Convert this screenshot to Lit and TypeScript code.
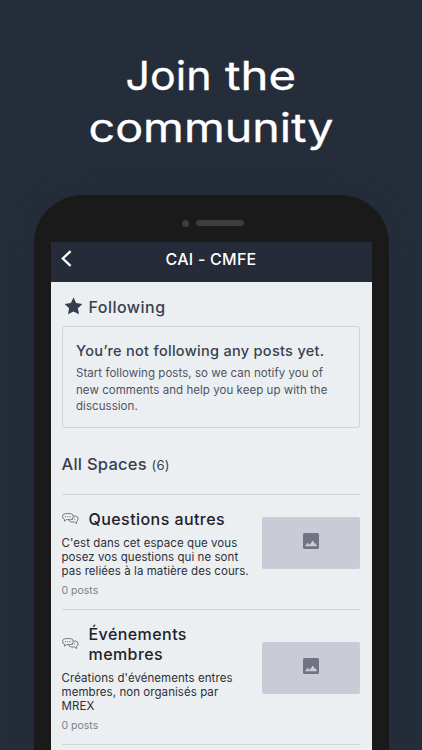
import { LitElement, html, css } from "lit";
import { customElement, property } from "lit/decorators.js";

interface Space {
  title: string[];
  text: string[];
  posts: number;
}

const spaces: Space[] = [
  {
    title: ["Questions autres"],
    text: ["C'est dans cet espace que vous", "posez vos questions qui ne sont", "pas reliées à la matière des cours."],
    posts: 0,
  },
  {
    title: ["Événements", "membres"],
    text: ["Créations d'événements entres", "membres, non organisés par", "MREX"],
    posts: 0,
  },
];

@customElement("space-row")
export class SpaceRow extends LitElement {
  @property({ attribute: false }) space!: Space;

  static styles = css`
    :host { display: flex; justify-content: space-between; align-items: center; border-top: 1px solid #d2d6da; }
    .info { padding: 14px 0 11.4px; white-space: nowrap; min-width: 0; }
    .head { display: flex; align-items: center; margin-bottom: 7px; }
    .bubbles { width: 17px; height: 12px; margin-right: 10px; flex: none; }
    .title { font-size: 16px; line-height: 20px; font-weight: 500; color: #1f2128; letter-spacing: 0.43px; }
    .line { display: block; }
    .text { font-size: 11.5px; line-height: 14.2px; color: #2d3036; letter-spacing: 0.06px; }
    .posts { font-size: 10.5px; line-height: 14px; color: #7d8085; margin-top: 5px; letter-spacing: 0; }
    .thumb { width: 97.5px; height: 52px; background: #c9ccd6; border-radius: 2px; margin-bottom: 18px; display: flex; justify-content: center; flex: none; }
    .photo { width: 16px; height: 16px; margin-top: 16px; }
  `;

  render() {
    const s = this.space;
    return html`
      <div class="info">
        <div class="head">
          <svg class="bubbles" viewBox="0 0 17 12" fill="none" stroke="#62666d" stroke-width=".85" stroke-linejoin="round">
            <path d="M3.3.6h5a2.9 2.9 0 0 1 0 6H4.4L2.5 8.2V6.4A3 3 0 0 1 3.3.6Z" />
            <path d="M11.3 3.1h2a2.8 2.8 0 0 1 1.3 5.3v2.2l-2-1.6H9.4a2.8 2.8 0 0 1-2.5-2" />
            <path d="M3 3.7h1M5.3 3.7h1M7.5 3.7h1M10 6h.9M12.3 6h.9" stroke-width="1" />
          </svg>
          <div class="title">${s.title.map((t) => html`<span class="line">${t}</span>`)}</div>
        </div>
        <div class="text">${s.text.map((t) => html`<span class="line">${t}</span>`)}</div>
        <div class="posts">${s.posts} posts</div>
      </div>
      <div class="thumb">
        <svg class="photo" viewBox="0 0 16 16">
          <rect width="16" height="16" rx="1.6" fill="#707482" />
          <path d="M2 13.2 4.6 9.8l1.9 2 3.5-4.3 1.7 3.2.9-.5 1.4 3Z" fill="#c9ccd6" />
        </svg>
      </div>
    `;
  }
}

@customElement("app-root")
export class AppRoot extends LitElement {
  static styles = css`
    :host { display: flex; flex-direction: column; align-items: center; box-sizing: border-box; width: 422px; height: 750px; overflow: hidden; background: #262d3a; font-family: Inter, sans-serif; }
    .headline { width: 422px; height: 195px; flex: none; fill: #fff; stroke: #fff; stroke-width: 0.35px; font-size: 39.5px; }
    .phone { width: 355px; height: 620px; flex: none; box-sizing: border-box; padding: 0 17px; background: #1a1a1a; border-radius: 49px 49px 0 0; box-shadow: 0 0 22px #222b3a; }
    .top { height: 47px; display: flex; align-items: center; justify-content: center; gap: 7px; padding: 9px 0 0 4px; box-sizing: border-box; }
    .camera { width: 7px; height: 7px; border-radius: 50%; background: #3d3d3d; }
    .speaker { width: 48px; height: 6px; border-radius: 3px; background: #3d3d3d; }
    .screen { background: #ebeff2; height: 573px; }
    .bar { height: 40px; background: #262b3a; color: #fff; display: grid; grid-template-columns: 32px 1fr 32px; }
    .back { width: 11px; height: 17px; margin: 8px 0 0 10.5px; }
    .name { text-align: center; font-size: 16px; line-height: 34px; font-weight: 500; letter-spacing: 0.25px; }
    .body { padding: 15px 12px 0 11px; color: #3a3e4d; }
    .following { display: flex; align-items: center; height: 20px; font-size: 16px; font-weight: 500; letter-spacing: 0.47px; padding-left: 2px; gap: 6px; }
    .star { width: 19px; height: 18px; margin-top: -2px; }
    .card { box-sizing: border-box; height: 102px; margin-top: 9px; border: 1px solid #cfd3d8; border-radius: 3px; padding: 14px 13.5px; white-space: nowrap; }
    .card-title { font-size: 14.5px; line-height: 20px; font-weight: 500; letter-spacing: 0.3px; }
    .card-text { font-size: 11.5px; line-height: 16.7px; margin-top: 4px; letter-spacing: 0.05px; color: #4f5362; }
    .line { display: block; }
    .all { font-size: 16.5px; line-height: 20px; font-weight: 500; letter-spacing: 0.25px; margin: 26px 0 19px; }
    .count { font-size: 13px; font-weight: 400; }
    .spaces { border-bottom: 1px solid #d2d6da; }
    .row { display: flex; }
  `;

  render() {
    return html`
      <svg class="headline" viewBox="0 0 422 195">
        <text x="125.5" y="89.5" textLength="86" lengthAdjust="spacingAndGlyphs">Join</text>
        <text x="225" y="89.5" textLength="71" lengthAdjust="spacingAndGlyphs">the</text>
        <text x="88.5" y="141.5" textLength="245" lengthAdjust="spacingAndGlyphs">community</text>
      </svg>
      <div class="phone">
        <div class="top"><span class="camera"></span><span class="speaker"></span></div>
        <div class="screen">
          <div class="bar">
            <svg class="back" viewBox="0 0 11 17" fill="none" stroke="#fff" stroke-width="2.3"><path d="M9.6 1.2 1.8 8.5l7.8 7.3" /></svg>
            <div class="name">CAI - CMFE</div>
          </div>
          <div class="body">
            <div class="following">
              <svg class="star" viewBox="0 0 20 19" fill="#373b50"><path d="m10 .5 2.8 5.9 6.5.9-4.7 4.5 1.2 6.5L10 15.2l-5.8 3.1 1.2-6.5L.7 7.3l6.5-.9Z" /></svg>
              <span>Following</span>
            </div>
            <div class="card">
              <div class="card-title">You’re not following any posts yet.</div>
              <div class="card-text">
                <span class="line">Start following posts, so we can notify you of</span>
                <span class="line">new comments and help you keep up with the</span>
                <span class="line">discussion.</span>
              </div>
            </div>
            <div class="all">All Spaces <span class="count">(6)</span></div>
            <div class="spaces">${spaces.map((s) => html`<space-row class="row" .space=${s}></space-row>`)}</div>
          </div>
        </div>
      </div>
    `;
  }
}
